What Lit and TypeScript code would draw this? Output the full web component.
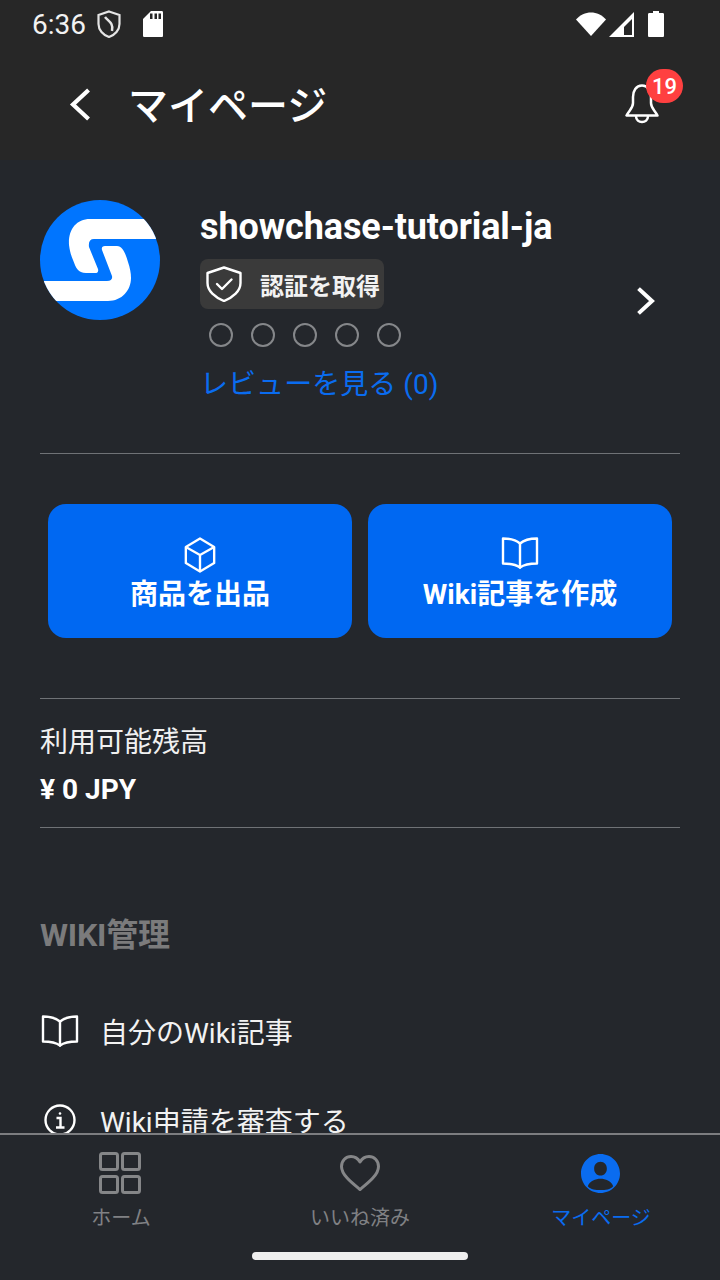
import { LitElement, html, css } from "lit";
import { customElement } from "lit/decorators.js";

const book = (w: number, h: number, sw = 2.4) => html`<svg width=${w} height=${h} viewBox="0 0 38 32" fill="none" stroke="#fff" stroke-width=${sw} stroke-linejoin="round" stroke-linecap="round"><path d="M19 6.500C15 3 9 1.500 2 1.500V26.500C9 26.500 15 27.500 19 30.500C23 27.500 29 26.500 36 26.500V1.500C29 1.500 23 3 19 6.500Z"/><path d="M19 6.500V30.500"/></svg>`;

@customElement("app-root")
export class AppRoot extends LitElement {
  static styles = css`
    :host { display: block; width: 720px; height: 1280px; background: #24272c; color: #fff;
      font-family: Roboto, "Noto Sans CJK JP", sans-serif; }
    .screen { width: 720px; height: 1280px; display: flex; flex-direction: column; overflow: hidden; }
    header { height: 160px; background: #272727; flex: none; display: flex; flex-direction: column; }
    .status { height: 48px; padding: 0 56px 0 32px; display: flex; align-items: center; justify-content: space-between; box-sizing: border-box; }
    .status-l, .status-r { display: flex; align-items: center; }
    .time { font-size: 28px; line-height: 48px; color: #f2f2f2; margin-right: 11px; padding-top: 1px; }
    .shield-st { margin-right: 22px; }
    .signal { margin: 0 14px 0 3px; }
    .toolbar { flex: 1; display: flex; align-items: center; padding: 0 61px 0 69px; }
    .title { font-size: 40px; font-weight: 500; line-height: 56px; margin-left: 37px; flex: 1; padding-top: 6px; }
    .bell { position: relative; width: 34px; height: 40px; }
    .bell svg { display: block; }
    .badge { position: absolute; left: 21px; top: -15px; width: 37px; height: 34px; border-radius: 17px; background: #ff4040;
      font-size: 22px; font-weight: 500; display: flex; align-items: center; justify-content: center; }
    main { flex: 1; min-height: 0; overflow: hidden; padding: 40px 40px 0; box-sizing: border-box; }
    .profile { display: flex; align-items: flex-start; height: 253px; border-bottom: 1px solid #6f7276; box-sizing: content-box; }
    .avatar { flex: none; width: 120px; height: 120px; margin-right: 40px; }
    .info { flex: 1; }
    .name { font-size: 36px; font-weight: 700; line-height: 54px; letter-spacing: -0.1px; }
    .verify { display: flex; align-items: center; height: 50px; width: 184px; box-sizing: border-box; background: #3a3a3a; border-radius: 8px; padding-left: 6px; gap: 18px; font-size: 24px; font-weight: 700; color: #f2f2f2; margin-top: 5px; }
    .dots { display: flex; gap: 18px; margin: 14px 0 0 9px; }
    .dot { width: 24px; height: 24px; border-radius: 50%; border: 2px solid #85878a; box-sizing: border-box; }
    .reviews { color: #0a6cf0; font-size: 28px; line-height: 40px; margin: 18px 0 0 0; letter-spacing: 0.05px; }
    .chev { margin: 87px 24px 0 0; }
    .actions { display: flex; gap: 16px; padding: 50px 8px 60px; }
    .action { flex: 1; height: 134px; background: #0068f2; border-radius: 18px; display: flex; flex-direction: column; align-items: center; padding-top: 33px; box-sizing: border-box; font-size: 28px; font-weight: 700; }
    .action span { line-height: 38px; margin-top: 3px; }
    .action span.wiki { margin-top: 7px; }
    .balance { border-top: 1px solid #6f7276; border-bottom: 1px solid #6f7276; height: 130px; box-sizing: border-box; padding-top: 20px; }
    .bal-label { font-size: 28px; line-height: 47px; color: #f0f0f0; }
    .bal-value { font-size: 28px; font-weight: 700; line-height: 48px; }
    h2 { margin: 83px 0 0; font-size: 32px; line-height: 48px; font-weight: 700; color: #7b7b7c; letter-spacing: -0.2px; }
    .row { display: flex; align-items: center; font-size: 28px; color: #f2f2f2; height: 40px; }
    .row.first { margin-top: 52px; }
    .row.second { margin-top: 49px; }
    .row .ico { width: 40px; display: flex; justify-content: center; margin-right: 20px; }
    nav { flex: none; height: 147px; border-top: 2px solid #7c7d80; box-sizing: border-box; position: relative; display: flex; background: #24272c; }
    .tab { flex: 1; display: flex; flex-direction: column; align-items: center; font-size: 20px; color: #808184; padding-top: 17px; }
    .tab .tab-ico { height: 42px; display: flex; align-items: center; }
    .tab svg { display: block; }
    .tab span { line-height: 32px; margin-top: 8px; }
    .tab.nudge span { margin-left: 2px; }
    .tab.on { color: #0a6cf0; }
    .home-bar { position: absolute; left: 252px; top: 117px; width: 216px; height: 8px; border-radius: 4px; background: #efefef; }
  `;

  render() {
    return html`<div class="screen">
      <header>
        <div class="status">
          <div class="status-l">
            <span class="time">6:36</span>
            <svg class="shield-st" width="24" height="28" viewBox="0 0 24 28" fill="none" stroke="#e4e4e4" stroke-width="2.200"><path d="M12 1.500 22.500 5V14C22.500 20 18 25 12 27 6 25 1.500 20 1.500 14V5Z"/><path d="M8 7C11 11 17 13 15 21" stroke-width="2.500"/></svg>
            <svg width="20" height="26" viewBox="0 0 20 26"><path fill="#fff" d="M8 0H18.500C19.500 0 20 .5 20 1.500V24.500C20 25.500 19.500 26 18.500 26H1.500C.5 26 0 25.500 0 24.500V8Z"/><path fill="#272727" d="M7 2.500H9.500V8H7ZM11.500 2.500H14V8H11.500ZM15.500 2.500H18V8H15.500Z"/></svg>
          </div>
          <div class="status-r">
            <svg width="30" height="24" viewBox="0 0 30 24"><path fill="#fff" d="M0 7.500C8 -2 22 -2 30 7.500L15 24Z"/></svg>
            <svg class="signal" width="25" height="25" viewBox="0 0 25 25"><path fill="#fff" fill-rule="evenodd" d="M25 0V25H0ZM23 7 15 15V23H23Z"/></svg>
            <svg width="16" height="26" viewBox="0 0 16 26"><path fill="#fff" d="M5 0H11V2H14.500C15.500 2 16 2.500 16 3.500V24.500C16 25.500 15.500 26 14.500 26H1.500C.5 26 0 25.500 0 24.500V3.500C0 2.500 .5 2 1.500 2H5Z"/></svg>
          </div>
        </div>
        <div class="toolbar">
          <svg width="22" height="33" viewBox="0 0 22 33" fill="none" stroke="#fff" stroke-width="4.200" stroke-linecap="square"><path d="M18 3.500 4 16.500 18 29.500"/></svg>
          <div class="title">マイページ</div>
          <div class="bell">
            <svg width="34" height="40" viewBox="0 0 34 40" fill="none" stroke="#fff" stroke-width="2.500" stroke-linejoin="round"><path d="M17 1.500C11 1.500 8 7 8 13V19C8 24 4.500 26 1.500 31.500H32.500C29.500 26 26 24 26 19V13C26 7 23 1.500 17 1.500Z"/><path d="M11 32C11 40 23 40 23 32"/></svg>
            <div class="badge">19</div>
          </div>
        </div>
      </header>
      <main>
        <section class="profile">
          <svg class="avatar" viewBox="0 0 120 120">
            <defs><clipPath id="c"><circle cx="60" cy="60" r="60"/></clipPath></defs>
            <circle cx="60" cy="60" r="60" fill="#0075ff"/>
            <g clip-path="url(#c)" fill="#fff">
              <path d="M125 19H50C36 19 28 30 29 45C30 52 31 55 33 60C36 68 38 73 46 73H55Q59 73 58 69L49 47Q48 39 54 39H125Z"/>
              <path d="M-5 81H67Q73 81 72 76L62 50Q61 46 65 46H77C83 46 86 55 88 62C90 68 91 73 91 78C91 90 82 101 68 101H-5Z"/>
            </g>
          </svg>
          <div class="info">
            <div class="name">showchase-tutorial-ja</div>
            <div class="verify">
              <svg width="36" height="36" viewBox="0 0 36 36" fill="none" stroke="#fff" stroke-width="2.400" stroke-linejoin="round" stroke-linecap="round"><path d="M18 1.500 34.500 7V17C34.500 25 27 31.500 18 35 9 31.500 1.500 25 1.500 17V7Z"/><path d="M11 18 16 23 25.500 13.500"/></svg>
              <span>認証を取得</span>
            </div>
            <div class="dots">${[0, 1, 2, 3, 4].map(() => html`<div class="dot"></div>`)}</div>
            <div class="reviews">レビューを見る (0)</div>
          </div>
          <svg class="chev" width="20" height="28" viewBox="0 0 20 28" fill="none" stroke="#fff" stroke-width="4" stroke-linecap="square"><path d="M4 3 16 14 4 25"/></svg>
        </section>
        <section class="actions">
          <div class="action">
            <svg width="34" height="36" viewBox="0 0 36 36" preserveAspectRatio="none" fill="none" stroke="#fff" stroke-width="2.500" stroke-linejoin="round"><path d="M18 1.500 33 10V26L18 34.500 3 26V10Z"/><path d="M3 10 18 18 33 10M18 18V34.500"/></svg>
            <span>商品を出品</span>
          </div>
          <div class="action">
            ${book(38, 32)}
            <span class="wiki">Wiki記事を作成</span>
          </div>
        </section>
        <section class="balance">
          <div class="bal-label">利用可能残高</div>
          <div class="bal-value">¥ 0 JPY</div>
        </section>
        <h2>WIKI管理</h2>
        <div class="row first"><div class="ico">${book(38, 32)}</div><span>自分のWiki記事</span></div>
        <div class="row second"><div class="ico"><svg width="32" height="32" viewBox="0 0 32 32" fill="none" stroke="#fff" stroke-width="2.400"><circle cx="16" cy="16" r="14.500"/><circle cx="16" cy="9.500" r="1.300" fill="#fff" stroke="none"/><path d="M12.500 14H16.500V23M12 23.500H20.500"/></svg></div><span>Wiki申請を審査する</span></div>
      </main>
      <nav>
        <div class="tab nudge">
          <div class="tab-ico"><svg width="42" height="42" viewBox="0 0 42 42" fill="none" stroke="#858688" stroke-width="3"><rect x="1.500" y="1.500" width="17" height="16" rx="2"/><rect x="23.500" y="1.500" width="17" height="16" rx="2"/><rect x="1.500" y="24.500" width="17" height="16" rx="2"/><rect x="23.500" y="24.500" width="17" height="16" rx="2"/></svg></div>
          <span>ホーム</span>
        </div>
        <div class="tab">
          <div class="tab-ico"><svg width="40" height="36" viewBox="0 0 40 36" fill="none" stroke="#858688" stroke-width="3" stroke-linejoin="round"><path d="M20 34.500C12 28 1.500 20 1.500 11.500C1.500 5.500 6 1.500 11 1.500C15 1.500 18 3.500 20 7C22 3.500 25 1.500 29 1.500C34 1.500 38.500 5.500 38.500 11.500C38.500 20 28 28 20 34.500Z"/></svg></div>
          <span>いいね済み</span>
        </div>
        <div class="tab on nudge">
          <div class="tab-ico"><svg width="39" height="39" viewBox="0 0 40 40"><path fill="#0a6cf0" fill-rule="evenodd" d="M20 0C31 0 40 9 40 20S31 40 20 40 0 31 0 20 9 0 20 0ZM20 8C16 8 13.500 11 13.500 15S16 22 20 22 26.500 19 26.500 15 24 8 20 8ZM7 33C10 36.500 15 37 20 37S30 36.500 33 33C31 28 25 25.500 20 25.500S9 28 7 33Z"/></svg></div>
          <span>マイページ</span>
        </div>
        <div class="home-bar"></div>
      </nav>
    </div>`;
  }
}
